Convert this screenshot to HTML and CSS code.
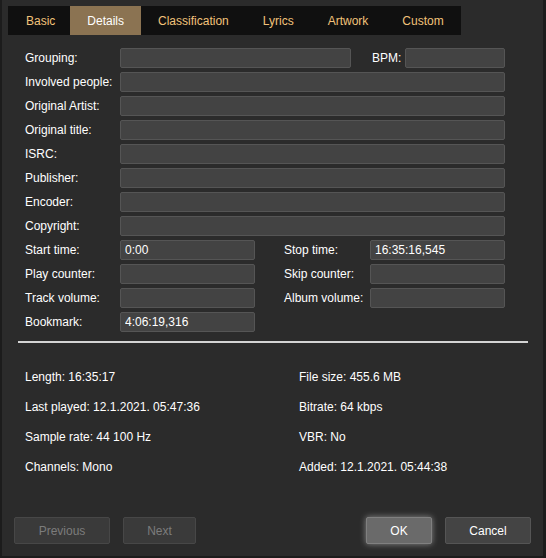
FILE: index.html
```html
<!DOCTYPE html>
<html lang="en">
<head>
    <meta charset="UTF-8">
    <title>Track Properties</title>
    <link rel="stylesheet" href="styles.css">
</head>
<body>
    <div class="dialog">
        <nav class="tabs">
            <a href="#">Basic</a>
            <a href="#" class="active">Details</a>
            <a href="#">Classification</a>
            <a href="#">Lyrics</a>
            <a href="#">Artwork</a>
            <a href="#">Custom</a>
        </nav>

        <form class="fields">
            <div class="row">
                <label class="lbl">Grouping:</label>
                <input class="in-group" type="text">
                <label class="lbl-bpm">BPM:</label>
                <input class="in-bpm" type="text">
            </div>
            <div class="row"><label class="lbl">Involved people:</label><input class="in-full" type="text"></div>
            <div class="row"><label class="lbl">Original Artist:</label><input class="in-full" type="text"></div>
            <div class="row"><label class="lbl">Original title:</label><input class="in-full" type="text"></div>
            <div class="row"><label class="lbl">ISRC:</label><input class="in-full" type="text"></div>
            <div class="row"><label class="lbl">Publisher:</label><input class="in-full" type="text"></div>
            <div class="row"><label class="lbl">Encoder:</label><input class="in-full" type="text"></div>
            <div class="row"><label class="lbl">Copyright:</label><input class="in-full" type="text"></div>
            <div class="row">
                <label class="lbl">Start time:</label>
                <input class="in-half" type="text" value="0:00">
                <label class="lbl-right">Stop time:</label>
                <input class="in-half" type="text" value="16:35:16,545">
            </div>
            <div class="row">
                <label class="lbl">Play counter:</label>
                <input class="in-half" type="text">
                <label class="lbl-right">Skip counter:</label>
                <input class="in-half" type="text">
            </div>
            <div class="row">
                <label class="lbl">Track volume:</label>
                <input class="in-half" type="text">
                <label class="lbl-right">Album volume:</label>
                <input class="in-half" type="text">
            </div>
            <div class="row">
                <label class="lbl">Bookmark:</label>
                <input class="in-half" type="text" value="4:06:19,316">
            </div>
        </form>

        <hr class="divider">

        <div class="info">
            <div>Length: 16:35:17</div>
            <div>File size: 455.6 MB</div>
            <div>Last played: 12.1.2021. 05:47:36</div>
            <div>Bitrate: 64 kbps</div>
            <div>Sample rate: 44 100 Hz</div>
            <div>VBR: No</div>
            <div>Channels: Mono</div>
            <div>Added: 12.1.2021. 05:44:38</div>
        </div>

        <div class="buttons">
            <button class="btn btn-prev" disabled>Previous</button>
            <button class="btn btn-next" disabled>Next</button>
            <span class="spacer"></span>
            <button class="btn btn-ok">OK</button>
            <button class="btn btn-cancel">Cancel</button>
        </div>
    </div>
</body>
</html>
```

FILE: styles.css
```css
body {
    margin: 0;
    padding: 0;
    background-color: #1c1c1c;
    font-family: "Liberation Sans", Arial, sans-serif;
    font-size: 12px;
    color: #fff;
}

.dialog {
    margin-left: 2px;
    width: 541px;
    height: 556px;
    background-color: #2b2b2b;
    display: flex;
    flex-direction: column;
    box-sizing: border-box;
    padding-bottom: 12px;
}

/* Tabs */
.tabs {
    display: flex;
    align-self: flex-start;
    margin: 6px 0 0 6px;
    height: 29px;
    background-color: #101010;
}

.tabs a {
    display: flex;
    align-items: center;
    padding: 0 17px;
    color: #f2c27a;
    text-decoration: none;
}

.tabs a:first-child {
    padding: 0 15px 0 18px;
}

.tabs a.active {
    background-color: #8b7352;
    color: #fff;
}

/* Fields */
.fields {
    margin: 13px 0 0 23px;
    display: flex;
    flex-direction: column;
    gap: 4px;
}

.row {
    display: flex;
    align-items: center;
    height: 20px;
}

.row label {
    white-space: nowrap;
}

.lbl {
    width: 95px;
}

.lbl-bpm {
    width: 33px;
    margin-left: 21px;
}

.lbl-right {
    width: 86px;
    margin-left: 29px;
}

.row input {
    box-sizing: border-box;
    height: 20px;
    margin: 0;
    padding: 0 4px;
    background-color: #434343;
    border: 1px solid #555;
    border-radius: 2px;
    color: #fff;
    font-family: inherit;
    font-size: 12px;
}

.in-full {
    width: 385px;
}

.in-group {
    width: 231px;
}

.in-bpm {
    width: 100px;
}

.in-half {
    width: 135px;
}

.divider {
    margin: 9px 15px 0 16px;
    border: none;
    height: 2px;
    background-color: #d4d4d4;
}

/* Info */
.info {
    margin: 19px 0 0 23px;
    display: grid;
    grid-template-columns: 274px 1fr;
    line-height: 30px;
}

/* Buttons */
.buttons {
    margin-top: auto;
    padding: 0 12px;
    display: flex;
    align-items: center;
}

.spacer {
    flex: 1;
}

.btn {
    box-sizing: border-box;
    height: 27px;
    border-radius: 2px;
    border: 1px solid #555;
    background-color: #444;
    color: #fff;
    font-family: inherit;
    font-size: 12px;
    cursor: pointer;
}

.btn:disabled {
    background-color: #3a3a3a;
    border-color: #474747;
    color: #7c7c7c;
    cursor: default;
}

.btn-prev {
    width: 96px;
}

.btn-next {
    width: 73px;
    margin-left: 13px;
}

.btn-ok {
    width: 66px;
    background-color: #6a6a6a;
    border-color: #808080;
    box-shadow: 0 0 6px rgba(255, 255, 255, 0.45);
}

.btn-cancel {
    width: 86px;
    margin-left: 13px;
}
```
